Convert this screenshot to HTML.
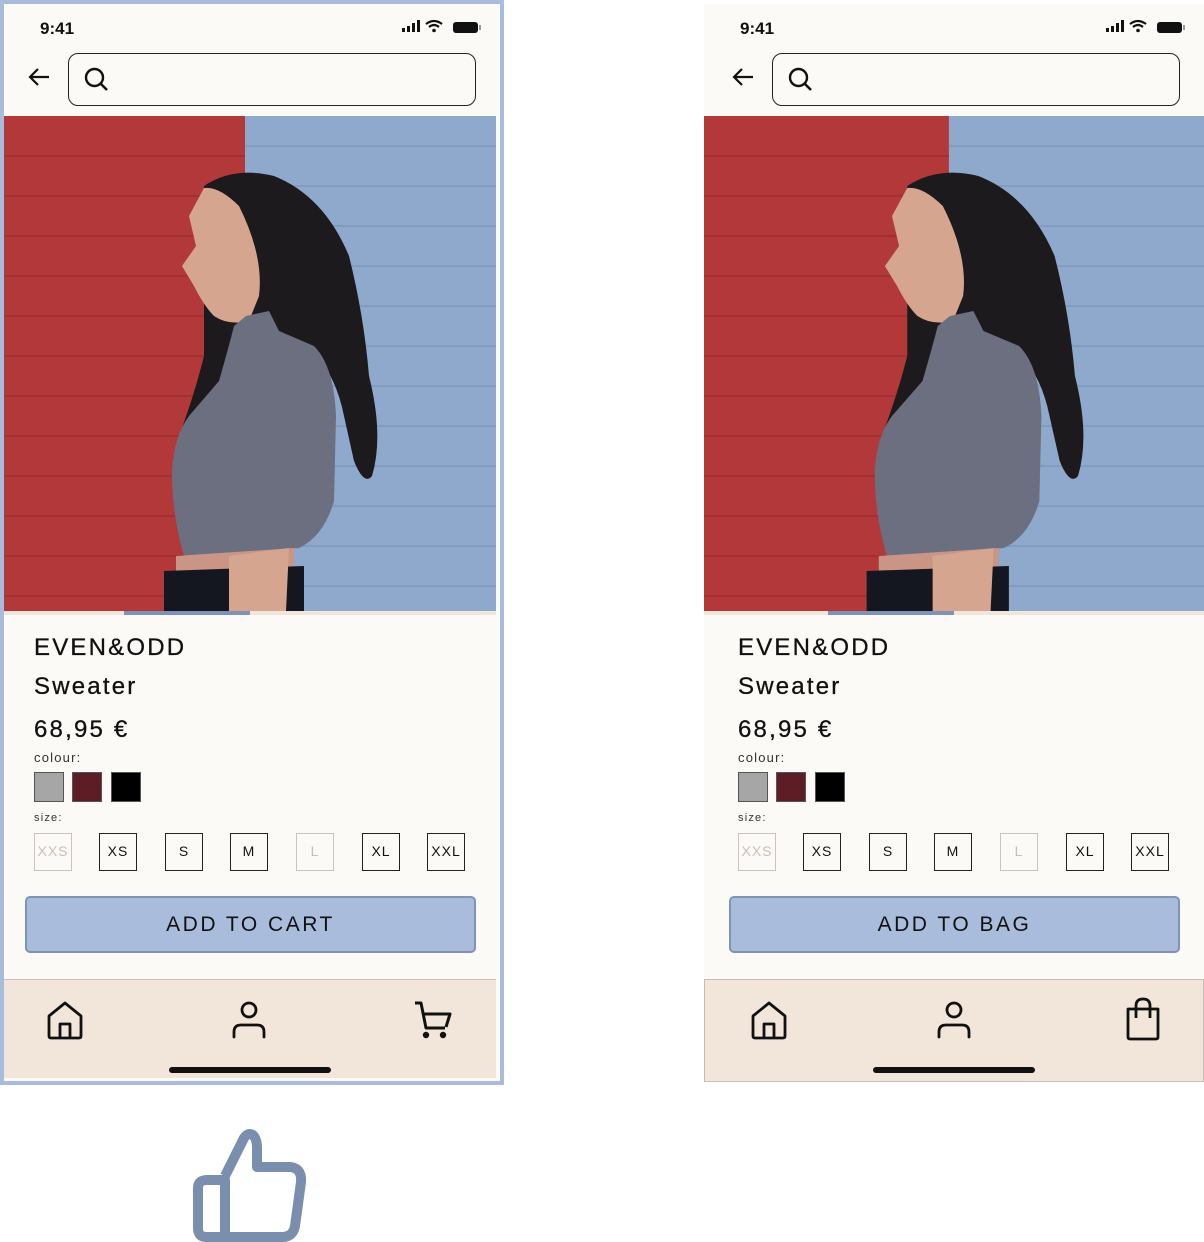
<!DOCTYPE html>
<html><head><meta charset="utf-8"><style>
*{margin:0;padding:0;box-sizing:border-box}
body{width:1204px;height:1242px;background:#fff;position:relative;overflow:hidden;font-family:"Liberation Sans",sans-serif;color:#111}
.ph{position:absolute;top:0;height:1085px;background:#fbfaf6}
.a{position:absolute}
.time{font-size:17px;font-weight:bold;top:15px;left:36px}
.search{top:49px;left:64px;width:408px;height:53px;border:1.5px solid #222;border-radius:10px}
.t1{font-size:24px;letter-spacing:2.2px;left:30px;-webkit-text-stroke:0.3px #111}
.lbl{font-size:13px;letter-spacing:1.2px;color:#333;left:30px}
.sw{width:30px;height:30px;top:772px;border:1px solid #555}
.sz{width:38px;height:38px;top:833px;border:1.5px solid #222;font-size:14px;text-align:center;line-height:35px;letter-spacing:1px}
.sz.off{border-color:#cfc4bd;color:#c9bdb5}
.btn{left:21px;top:896px;width:451px;height:57px;background:#a9bcdc;border:2px solid #7e93b5;border-radius:5px;text-align:center;line-height:53px;font-size:21px;letter-spacing:2.5px}
.nav{top:979px;height:100px;background:#f2e6da;border-top:1.5px solid #cdbfb2}
</style></head><body>

<!-- LEFT PHONE -->
<div class="ph" style="left:0;width:504px;border:4px solid #a9bcdc;border-top-width:4px">
</div>
<div class="a" style="left:4px;top:4px;width:492px;height:1074px">
 <div class="a time">9:41</div>
 <svg class="a" style="left:396px;top:15px" width="82" height="16" viewBox="0 0 82 16">
  <rect x="2" y="9" width="3" height="4" fill="#111"/><rect x="7" y="7" width="3" height="6" fill="#111"/><rect x="12" y="4" width="3" height="9" fill="#111"/><rect x="17" y="1" width="3" height="12" fill="#111"/>
  <path d="M26 5 Q34 -1 42 5" stroke="#111" stroke-width="2.2" fill="none"/><path d="M29 8 Q34 4 39 8" stroke="#111" stroke-width="2.2" fill="none"/><circle cx="34" cy="11.5" r="1.8" fill="#111"/>
  <rect x="53" y="3" width="25" height="11" rx="3" fill="#111"/><rect x="79" y="6" width="2" height="5" fill="#999"/>
 </svg>
 <svg class="a" style="left:22px;top:60px" width="26" height="26" viewBox="0 0 26 26"><path d="M23 13H4M12 5L4 13L12 21" stroke="#111" stroke-width="2.2" fill="none"/></svg>
 <div class="a search"><svg class="a" style="left:14px;top:12px" width="28" height="28" viewBox="0 0 28 28"><circle cx="11.5" cy="11.5" r="8.5" stroke="#111" stroke-width="2.4" fill="none"/><path d="M18 18L24 24" stroke="#111" stroke-width="2.6"/></svg></div>
 <svg class="a" style="left:0;top:112px" width="492" height="495" viewBox="0 0 492 495" preserveAspectRatio="none">
  <rect width="492" height="495" fill="#8ea9cb"/>
  <rect width="241" height="495" fill="#b3383a"/>
  <g stroke="#7a95b8" stroke-width="2" opacity=".6"><path d="M241 30H492M241 70H492M241 110H492M241 150H492M241 190H492M241 230H492M241 270H492M241 310H492M241 350H492M241 390H492M241 430H492M241 470H492"/></g>
  <g stroke="#9a2e31" stroke-width="2" opacity=".6"><path d="M0 40H241M0 80H241M0 120H241M0 160H241M0 200H241M0 240H241M0 280H241M0 320H241M0 360H241M0 400H241M0 440H241M0 480H241"/></g>
  <path d="M200 70 Q230 50 270 60 Q320 80 345 140 Q360 200 365 260 Q380 320 368 360 Q360 370 350 345 L340 300 Q330 250 300 230 L250 200 L230 230 Q210 280 195 330 L175 320 Q190 280 200 240 Z" fill="#1c1a1d"/>
  <path d="M200 72 Q215 70 235 90 Q260 140 255 180 L245 205 Q225 210 210 200 Q200 190 190 170 L178 150 Q185 140 192 130 L185 100 Z" fill="#d6a58f"/>
  <path d="M242 200 L265 195 L275 215 L310 230 Q330 250 332 300 L330 385 Q320 420 295 432 L180 440 Q168 400 168 355 Q170 320 185 300 L215 265 Q225 230 230 210 Z" fill="#6c6f80"/>
  <path d="M172 440 L290 432 L290 462 L172 462 Z" fill="#c99584"/>
  <path d="M160 455 L300 450 L300 495 L160 495 Z" fill="#14171f"/>
  <path d="M225 440 L285 432 L282 495 L225 495 Z" fill="#d6a58f"/>
 </svg>
 <div class="a" style="left:0;top:607px;width:492px;height:4px;background:#f2e6da"></div>
 <div class="a" style="left:120px;top:607px;width:126px;height:4px;background:#7e93b5"></div>
 <div class="a t1" style="top:630px">EVEN&amp;ODD</div>
 <div class="a t1" style="top:669px">Sweater</div>
 <div class="a t1" style="top:712px">68,95 €</div>
 <div class="a lbl" style="top:746px">colour:</div>
 <div class="a sw" style="left:30px;top:768px;background:#a6a6a6"></div>
 <div class="a sw" style="left:68px;top:768px;background:#5e1c24"></div>
 <div class="a sw" style="left:107px;top:768px;background:#000"></div>
 <div class="a lbl" style="top:808px;font-size:11px">size:</div>
 <div class="a sz off" style="left:30px;top:829px">XXS</div>
 <div class="a sz" style="left:95px;top:829px">XS</div>
 <div class="a sz" style="left:161px;top:829px">S</div>
 <div class="a sz" style="left:226px;top:829px">M</div>
 <div class="a sz off" style="left:292px;top:829px">L</div>
 <div class="a sz" style="left:358px;top:829px">XL</div>
 <div class="a sz" style="left:423px;top:829px">XXL</div>
 <div class="a btn" style="top:892px">ADD TO CART</div>
 <div class="a nav" style="left:0;top:975px;width:492px;height:99px">
  <svg class="a" style="left:42px;top:20px" width="40" height="42" viewBox="0 0 40 42"><path d="M3 36V16L19 3L35 16V36Q35 38 33 38H5Q3 38 3 36ZM14 38V24H24V38" stroke="#111" stroke-width="2.8" fill="none" stroke-linejoin="round"/></svg>
  <svg class="a" style="left:226px;top:20px" width="38" height="42" viewBox="0 0 38 42"><circle cx="19" cy="10" r="7" stroke="#111" stroke-width="2.8" fill="none"/><path d="M4 37V32Q4 25 11 25H27Q34 25 34 32V37" stroke="#111" stroke-width="2.8" fill="none" stroke-linecap="round"/></svg>
  <svg class="a" style="left:408px;top:20px" width="42" height="42" viewBox="0 0 42 42"><path d="M3 3H9L14 28H33M11 14H38L34 27" stroke="#111" stroke-width="3" fill="none" stroke-linejoin="round"/><circle cx="14" cy="35" r="3.2" fill="#111"/><circle cx="31" cy="35" r="3.2" fill="#111"/></svg>
  <div class="a" style="left:165px;top:87px;width:162px;height:6px;border-radius:3px;background:#111"></div>
 </div>
</div>

<!-- thumb -->
<svg class="a" style="left:190px;top:1126px" width="120" height="116" viewBox="0 0 120 116"><path d="M35 50L54 12Q58 6 63 9Q67 13 67 22V41H100Q112 42 111 56L105 100Q103 111 92 111H16Q8 111 8 102V62Q8 54 17 54H35V111" stroke="#7a8fae" stroke-width="10" fill="none" stroke-linejoin="round"/></svg>

<!-- RIGHT PHONE -->
<div class="a" style="left:704px;top:4px;width:500px;height:1078px;background:#fbfaf6">
 <div class="a time">9:41</div>
 <svg class="a" style="left:400px;top:15px" width="82" height="16" viewBox="0 0 82 16">
  <rect x="2" y="9" width="3" height="4" fill="#111"/><rect x="7" y="7" width="3" height="6" fill="#111"/><rect x="12" y="4" width="3" height="9" fill="#111"/><rect x="17" y="1" width="3" height="12" fill="#111"/>
  <path d="M26 5 Q34 -1 42 5" stroke="#111" stroke-width="2.2" fill="none"/><path d="M29 8 Q34 4 39 8" stroke="#111" stroke-width="2.2" fill="none"/><circle cx="34" cy="11.5" r="1.8" fill="#111"/>
  <rect x="53" y="3" width="25" height="11" rx="3" fill="#111"/><rect x="79" y="6" width="2" height="5" fill="#999"/>
 </svg>
 <svg class="a" style="left:26px;top:60px" width="26" height="26" viewBox="0 0 26 26"><path d="M23 13H4M12 5L4 13L12 21" stroke="#111" stroke-width="2.2" fill="none"/></svg>
 <div class="a search" style="left:68px"><svg class="a" style="left:14px;top:12px" width="28" height="28" viewBox="0 0 28 28"><circle cx="11.5" cy="11.5" r="8.5" stroke="#111" stroke-width="2.4" fill="none"/><path d="M18 18L24 24" stroke="#111" stroke-width="2.6"/></svg></div>
 <svg class="a" style="left:0;top:112px" width="500" height="495" viewBox="0 0 492 495" preserveAspectRatio="none">
  <rect width="492" height="495" fill="#8ea9cb"/>
  <rect width="241" height="495" fill="#b3383a"/>
  <g stroke="#7a95b8" stroke-width="2" opacity=".6"><path d="M241 30H492M241 70H492M241 110H492M241 150H492M241 190H492M241 230H492M241 270H492M241 310H492M241 350H492M241 390H492M241 430H492M241 470H492"/></g>
  <g stroke="#9a2e31" stroke-width="2" opacity=".6"><path d="M0 40H241M0 80H241M0 120H241M0 160H241M0 200H241M0 240H241M0 280H241M0 320H241M0 360H241M0 400H241M0 440H241M0 480H241"/></g>
  <path d="M200 70 Q230 50 270 60 Q320 80 345 140 Q360 200 365 260 Q380 320 368 360 Q360 370 350 345 L340 300 Q330 250 300 230 L250 200 L230 230 Q210 280 195 330 L175 320 Q190 280 200 240 Z" fill="#1c1a1d"/>
  <path d="M200 72 Q215 70 235 90 Q260 140 255 180 L245 205 Q225 210 210 200 Q200 190 190 170 L178 150 Q185 140 192 130 L185 100 Z" fill="#d6a58f"/>
  <path d="M242 200 L265 195 L275 215 L310 230 Q330 250 332 300 L330 385 Q320 420 295 432 L180 440 Q168 400 168 355 Q170 320 185 300 L215 265 Q225 230 230 210 Z" fill="#6c6f80"/>
  <path d="M172 440 L290 432 L290 462 L172 462 Z" fill="#c99584"/>
  <path d="M160 455 L300 450 L300 495 L160 495 Z" fill="#14171f"/>
  <path d="M225 440 L285 432 L282 495 L225 495 Z" fill="#d6a58f"/>
 </svg>
 <div class="a" style="left:0;top:607px;width:500px;height:4px;background:#f2e6da"></div>
 <div class="a" style="left:124px;top:607px;width:126px;height:4px;background:#7e93b5"></div>
 <div class="a t1" style="top:630px;left:34px">EVEN&amp;ODD</div>
 <div class="a t1" style="top:669px;left:34px">Sweater</div>
 <div class="a t1" style="top:712px;left:34px">68,95 €</div>
 <div class="a lbl" style="top:746px;left:34px">colour:</div>
 <div class="a sw" style="left:34px;top:768px;background:#a6a6a6"></div>
 <div class="a sw" style="left:72px;top:768px;background:#5e1c24"></div>
 <div class="a sw" style="left:111px;top:768px;background:#000"></div>
 <div class="a lbl" style="top:808px;left:34px;font-size:11px">size:</div>
 <div class="a sz off" style="left:34px;top:829px">XXS</div>
 <div class="a sz" style="left:99px;top:829px">XS</div>
 <div class="a sz" style="left:165px;top:829px">S</div>
 <div class="a sz" style="left:230px;top:829px">M</div>
 <div class="a sz off" style="left:296px;top:829px">L</div>
 <div class="a sz" style="left:362px;top:829px">XL</div>
 <div class="a sz" style="left:427px;top:829px">XXL</div>
 <div class="a btn" style="top:892px;left:25px">ADD TO BAG</div>
 <div class="a nav" style="left:0;top:975px;width:500px;height:103px;border:1.5px solid #c8bcb2">
  <svg class="a" style="left:45px;top:20px" width="40" height="42" viewBox="0 0 40 42"><path d="M3 36V16L19 3L35 16V36Q35 38 33 38H5Q3 38 3 36ZM14 38V24H24V38" stroke="#111" stroke-width="2.8" fill="none" stroke-linejoin="round"/></svg>
  <svg class="a" style="left:230px;top:20px" width="38" height="42" viewBox="0 0 38 42"><circle cx="19" cy="10" r="7" stroke="#111" stroke-width="2.8" fill="none"/><path d="M4 37V32Q4 25 11 25H27Q34 25 34 32V37" stroke="#111" stroke-width="2.8" fill="none" stroke-linecap="round"/></svg>
  <svg class="a" style="left:418px;top:16px" width="40" height="48" viewBox="0 0 40 48"><path d="M5 13H35V41Q35 43 33 43H7Q5 43 5 41Z" stroke="#111" stroke-width="2.8" fill="none" stroke-linejoin="round"/><path d="M13 22V10Q13 3 20 3Q27 3 27 10V22" stroke="#111" stroke-width="2.8" fill="none"/></svg>
  <div class="a" style="left:168px;top:87px;width:162px;height:6px;border-radius:3px;background:#111"></div>
 </div>
</div>
</body></html>
